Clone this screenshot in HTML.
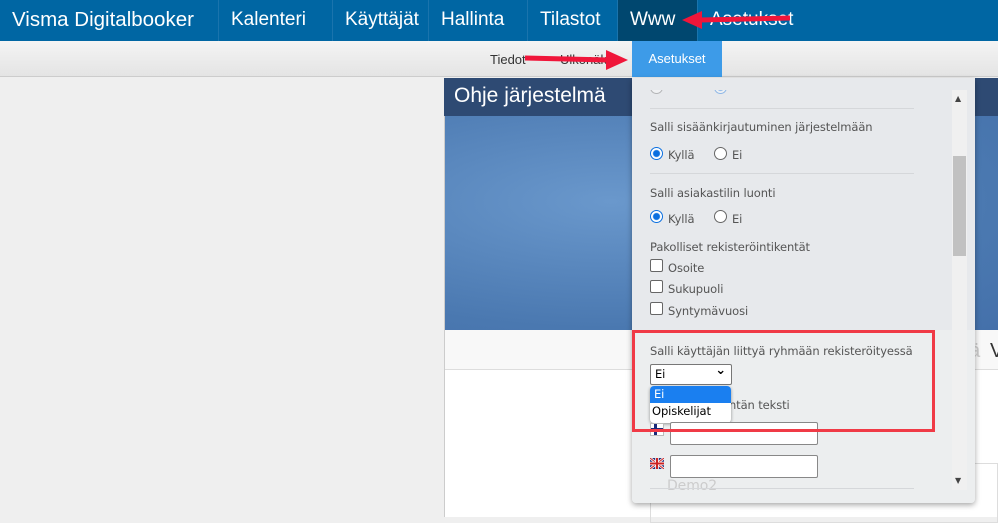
<!DOCTYPE html>
<html><head><meta charset="utf-8"><style>
*{margin:0;padding:0;box-sizing:border-box}
body{width:998px;height:517px;overflow:hidden;background:#efefef;font-family:"Liberation Sans",sans-serif;position:relative}
.top{position:absolute;left:0;top:0;width:998px;height:41px;background:#0066a3}
.top div{position:absolute;top:0;height:41px;line-height:40px;color:#fff;font-size:19px;border-right:1px solid #1a74ad;padding:0 12px}
.sub{position:absolute;left:0;top:41px;width:998px;height:36px;background:linear-gradient(#f4f4f4,#e4e4e4);border-bottom:1px solid #ccc}
.abs{position:absolute}
.pop{position:absolute;left:632px;top:78px;width:343px;height:425px;background:#e7e9ec;box-shadow:0 2px 6px rgba(0,0,0,.35);border-radius:0 0 4px 4px;font-family:"DejaVu Sans",sans-serif;color:#555;font-size:11.5px;letter-spacing:-0.1px}
.pop .t{position:absolute;left:18px}
.hr{position:absolute;left:18px;width:264px;height:1px;background:#fff;border-top:1px solid #d5d7da}
.rad{position:absolute;width:13px;height:13px;border-radius:50%;border:1px solid #666;background:#fff}
.rad.on{border:1px solid #0a6fe0;background:radial-gradient(#0a6fe0 3px,#fff 4px)}
.cb{position:absolute;width:13px;height:13px;border:1px solid #666;border-radius:2px;background:#fff}
.inp{position:absolute;width:148px;height:23px;background:#fff;border:1px solid #888;border-radius:2px}
</style></head><body>
<div class="top">
<div style="left:0;width:219px;font-size:20.5px">Visma Digitalbooker</div>
<div style="left:219px;width:114px">Kalenteri</div>
<div style="left:333px;width:96px">Käyttäjät</div>
<div style="left:429px;width:99px">Hallinta</div>
<div style="left:528px;width:90px">Tilastot</div>
<div style="left:618px;width:80px;background:#00476f">Www</div>
<div style="left:698px;border:none;color:#fff">Asetukset</div>
</div>
<div class="sub">
<span class="abs" style="left:490px;top:11px;font-size:13px;color:#333">Tiedot</span>
<span class="abs" style="left:560px;top:11px;font-size:13px;color:#333">Ulkonäkö</span>
<div class="abs" style="left:632px;top:0;width:90px;height:36px;background:#3d9be8;color:#fff;font-size:13px;line-height:36px;text-align:center">Asetukset</div>
</div>
<div class="abs" style="left:444px;top:78px;width:554px;height:439px;background:#fff;border-left:1px solid #ccc"></div>
<div class="abs" style="left:444px;top:78px;width:554px;height:38px;background:#2e4a73;color:#fff;font-size:21px;padding:6px 10px">Ohje järjestelmä</div>
<div class="abs" style="left:445px;top:116px;width:553px;height:214px;background:radial-gradient(ellipse at 30% 40%,#6a98cc,#4a78b0 70%,#4470aa)"></div>
<div class="abs" style="left:445px;top:330px;width:553px;height:40px;background:#f8f8f8;border-bottom:1px solid #ddd"></div>
<span class="abs" style="left:815px;top:340px;font-size:20px;color:#ccc">Mitä haluat te</span><span class="abs" style="left:958px;top:340px;font-size:20px;color:#ccc">dä</span><span class="abs" style="left:990px;top:340px;font-size:20px;color:#333">V</span>
<div class="abs" style="left:650px;top:463px;width:348px;height:60px;border:1px solid #ddd"></div>
<div class="pop">
<div class="rad" style="left:18px;top:3px;opacity:.4"></div><div class="rad on" style="left:82px;top:3px;opacity:.4"></div>
<div class="abs" style="left:0;top:0;width:320px;height:12px;background:#e7e9ec"></div>
<div class="hr" style="top:30px;width:264px"></div>
<div class="t" style="top:42px">Salli sisäänkirjautuminen järjestelmään</div>
<div class="rad on" style="left:18px;top:69px"></div><div class="t" style="left:36px;top:70px">Kyllä</div>
<div class="rad" style="left:82px;top:69px"></div><div class="t" style="left:100px;top:70px">Ei</div>
<div class="hr" style="top:95px"></div>
<div class="t" style="top:108px">Salli asiakastilin luonti</div>
<div class="rad on" style="left:18px;top:132px"></div><div class="t" style="left:36px;top:134px">Kyllä</div>
<div class="rad" style="left:82px;top:132px"></div><div class="t" style="left:100px;top:134px">Ei</div>
<div class="t" style="top:162px">Pakolliset rekisteröintikentät</div>
<div class="cb" style="left:18px;top:181px"></div><div class="t" style="left:36px;top:183px">Osoite</div>
<div class="cb" style="left:18px;top:202px"></div><div class="t" style="left:36px;top:204px">Sukupuoli</div>
<div class="cb" style="left:18px;top:224px"></div><div class="t" style="left:36px;top:226px">Syntymävuosi</div>
<div class="abs" style="left:0;top:252px;width:343px;height:173px;background:#eceeef;border-radius:0 0 4px 4px"></div>
<div class="t" style="top:266px">Salli käyttäjän liittyä ryhmään rekisteröityessä</div>
<div class="abs" style="left:18px;top:286px;width:82px;height:21px;background:#fff;border:1px solid #777;border-radius:2px;color:#000;padding:2px 4px">Ei<span style="position:absolute;right:5px;top:-2px;font-weight:bold;font-size:13px">⌄</span></div>
<div class="t" style="left:90px;top:320px">entän teksti</div>
<div class="abs" style="left:18px;top:308px;width:81px;height:37px;background:#fff;border-radius:4px;box-shadow:0 1px 3px rgba(0,0,0,.4);color:#000">
<div style="background:#1a7ff0;color:#fff;height:17px;padding:1px 4px;border-radius:4px 4px 0 0">Ei</div><div style="padding:1px 2px">Opiskelijat</div></div>
<div class="abs" style="left:18px;top:345px;width:14px;height:13px;background:#fff;border:1px solid #bbb"><div style="position:absolute;left:3px;top:0;width:3px;height:11px;background:#1a2a7a"></div><div style="position:absolute;left:0;top:4px;width:12px;height:3px;background:#1a2a7a"></div></div>
<div class="inp" style="left:38px;top:344px"></div>
<svg class="abs" style="left:18px;top:380px" width="14" height="11"><rect width="14" height="11" fill="#24307a"/><path d="M0 0L14 11M14 0L0 11" stroke="#fff" stroke-width="2.5"/><path d="M0 0L14 11M14 0L0 11" stroke="#c22" stroke-width="1"/><path d="M7 0V11M0 5.5H14" stroke="#fff" stroke-width="3.5"/><path d="M7 0V11M0 5.5H14" stroke="#c22" stroke-width="2"/></svg>
<div class="inp" style="left:38px;top:377px"></div>
<div class="t" style="left:35px;top:400px;color:#ccc;font-size:14px">Demo2</div>
<div class="hr" style="top:410px"></div>
<div class="abs" style="left:320px;top:12px;width:15px;height:400px;background:#f0f0f0"></div>
<div class="abs" style="left:321px;top:78px;width:13px;height:100px;background:#c1c1c1"></div>
<div class="abs" style="left:323px;top:16px;font-size:8px;color:#444">▲</div>
<div class="abs" style="left:323px;top:398px;font-size:8px;color:#444">▼</div>
</div>
<div class="abs" style="left:632px;top:330px;width:303px;height:102px;border:3px solid #f03a46"></div>
<svg class="abs" style="left:0;top:0" width="998" height="517">
<line x1="700" y1="20" x2="790" y2="18" stroke="#f0163a" stroke-width="5"/>
<polygon points="682,20 702,11 702,29" fill="#f0163a"/>
<line x1="525" y1="58" x2="608" y2="60" stroke="#f0163a" stroke-width="5"/>
<polygon points="628,60 606,50 606,70" fill="#f0163a"/>
</svg>
</body></html>
